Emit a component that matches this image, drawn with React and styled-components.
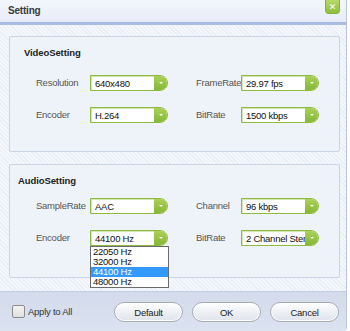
import React from "react";
import { styled, createGlobalStyle } from "styled-components";

const Global = createGlobalStyle`
  html, body {
    margin: 0;
    padding: 0;
    background: #ffffff;
  }
  body {
    font-family: "Liberation Sans", Arial, sans-serif;
    font-size: 9.5px;
    letter-spacing: -0.25px;
    color: #333;
  }
`;

const Window = styled.div`
  width: 346px;
  height: 331px;
  border-right: 1px solid #b9c4d8;
  border-bottom-right-radius: 4px;
  display: flex;
  flex-direction: column;
  overflow: hidden;
  position: relative;
`;

const TitleBar = styled.div`
  height: 22px;
  display: flex;
  align-items: center;
  justify-content: space-between;
  padding-left: 8px;
  background: linear-gradient(#f3f6fc, #e6ecf7);
  border-bottom: 3px solid #a9bde2;
  font-weight: bold;
  font-size: 10px;
  letter-spacing: -0.2px;
  color: #3a3a3a;
`;

const CloseButton = styled.div`
  align-self: flex-start;
  width: 15px;
  height: 14px;
  margin-right: 6px;
  border-radius: 0 0 4px 4px;
  background: linear-gradient(#b6d86c, #8fbe3c);
  border: 1px solid #86b03a;
  border-top: none;
  box-sizing: border-box;
  color: #fff;
  font-family: "DejaVu Sans", sans-serif;
  font-size: 9px;
  font-weight: bold;
  display: flex;
  align-items: center;
  justify-content: center;
`;

const Body = styled.div`
  flex: 1;
  padding: 11px 6px 13px 9px;
  display: flex;
  flex-direction: column;
  gap: 12px;
  background: repeating-linear-gradient(
    45deg,
    #e8edf6 0 1px,
    #f3f6fb 1px 3px
  );
`;

const Panel = styled.div`
  height: ${(p) => p.$h}px;
  box-sizing: border-box;
  background: #eef3fa;
  border: 1px solid #c9d4e6;
  border-radius: 2px;
  position: relative;
  padding: 10px 0 0 ${(p) => p.$pl}px;
`;

const Heading = styled.div`
  font-weight: bold;
  color: #222;
  font-size: 9.5px;
  letter-spacing: -0.1px;
  height: 13px;
`;

const Grid = styled.div`
  display: grid;
  grid-template-columns: 54px 78px 28px 45px 78px;
  grid-auto-rows: 16px;
  row-gap: 16px;
  align-items: center;
  margin-top: ${(p) => p.$mt}px;
  margin-left: ${(p) => p.$ml}px;
`;

const Label = styled.div`
  color: #555;
  grid-column: ${(p) => p.$col};
  white-space: nowrap;
`;

const SelectBox = styled.div`
  grid-column: ${(p) => p.$col};
  height: 16px;
  box-sizing: border-box;
  border: 1px solid #8dbb3d;
  border-radius: 0 8px 8px 0;
  background: #fff;
  display: flex;
  position: relative;
`;

const SelectText = styled.div`
  flex: 1;
  padding-left: 3px;
  line-height: 14px;
  color: #111;
  white-space: nowrap;
  overflow: hidden;
  border-top: 1px solid #d6e6b8;
  border-left: 1px solid #d6e6b8;
`;

const Arrow = styled.div`
  width: 13px;
  border-radius: 0 7px 7px 0;
  background: linear-gradient(#a9d158, #86b834);
  display: flex;
  align-items: center;
  justify-content: center;
  &::after {
    content: "";
    border-left: 2px solid transparent;
    border-right: 2px solid transparent;
    border-top: 2px solid #fff;
  }
`;

const List = styled.div`
  position: absolute;
  top: 15px;
  left: -1px;
  width: 77px;
  background: #fff;
  border: 1px solid #6b6b6b;
  z-index: 5;
`;

const Item = styled.div`
  height: 10px;
  line-height: 10px;
  padding-left: 2px;
  overflow: hidden;
  color: ${(p) => (p.$sel ? "#fff" : "#111")};
  background: ${(p) => (p.$sel ? "#3399ff" : "#fff")};
`;

const Footer = styled.div`
  height: 41px;
  box-sizing: border-box;
  background: linear-gradient(#d3dbec, #dbe2f0);
  border-top: 1px solid #c3cde0;
  display: flex;
  align-items: center;
  padding: 0 7px 0 12px;
`;

const Check = styled.label`
  display: flex;
  align-items: center;
  gap: 3px;
  color: #333;
  flex: 1;
  margin-top: 1px;
  span {
    width: 11px;
    height: 11px;
    border: 1px solid #8b8b8b;
    border-radius: 2px;
    background: linear-gradient(#f3f3f3, #e0e0e0);
  }
`;

const Button = styled.div`
  width: 69px;
  height: 20px;
  box-sizing: border-box;
  margin-left: 9px;
  margin-top: 2px;
  border: 1px solid #a6abb5;
  border-radius: 10px;
  background: linear-gradient(#ffffff, #eef0f4 50%, #dfe3ea);
  box-shadow: inset 0 0 0 1px #ffffff;
  display: flex;
  align-items: center;
  justify-content: center;
  color: #222;
`;

function Select({ col, value, children }) {
  return (
    <SelectBox $col={col}>
      <SelectText>{value}</SelectText>
      <Arrow />
      {children}
    </SelectBox>
  );
}

export default function App() {
  return (
    <>
      <Global />
      <Window>
        <TitleBar>
          Setting
          <CloseButton>✕</CloseButton>
        </TitleBar>
        <Body>
          <Panel $h={116} $pl={14}>
            <Heading>VideoSetting</Heading>
            <Grid $mt={15} $ml={12}>
              <Label $col={1}>Resolution</Label>
              <Select col={2} value="640x480" />
              <Label $col={4}>FrameRate</Label>
              <Select col={5} value="29.97 fps" />
              <Label $col={1}>Encoder</Label>
              <Select col={2} value="H.264" />
              <Label $col={4}>BitRate</Label>
              <Select col={5} value="1500 kbps" />
            </Grid>
          </Panel>
          <Panel $h={114} $pl={8}>
            <Heading>AudioSetting</Heading>
            <Grid $mt={10} $ml={18}>
              <Label $col={1}>SampleRate</Label>
              <Select col={2} value="AAC" />
              <Label $col={4}>Channel</Label>
              <Select col={5} value="96 kbps" />
              <Label $col={1}>Encoder</Label>
              <Select col={2} value="44100 Hz">
                <List>
                  <Item>22050 Hz</Item>
                  <Item>32000 Hz</Item>
                  <Item $sel>44100 Hz</Item>
                  <Item>48000 Hz</Item>
                </List>
              </Select>
              <Label $col={4}>BitRate</Label>
              <Select col={5} value="2 Channel Stereo" />
            </Grid>
          </Panel>
        </Body>
        <Footer>
          <Check>
            <span />
            Apply to All
          </Check>
          <Button>Default</Button>
          <Button>OK</Button>
          <Button>Cancel</Button>
        </Footer>
      </Window>
    </>
  );
}
